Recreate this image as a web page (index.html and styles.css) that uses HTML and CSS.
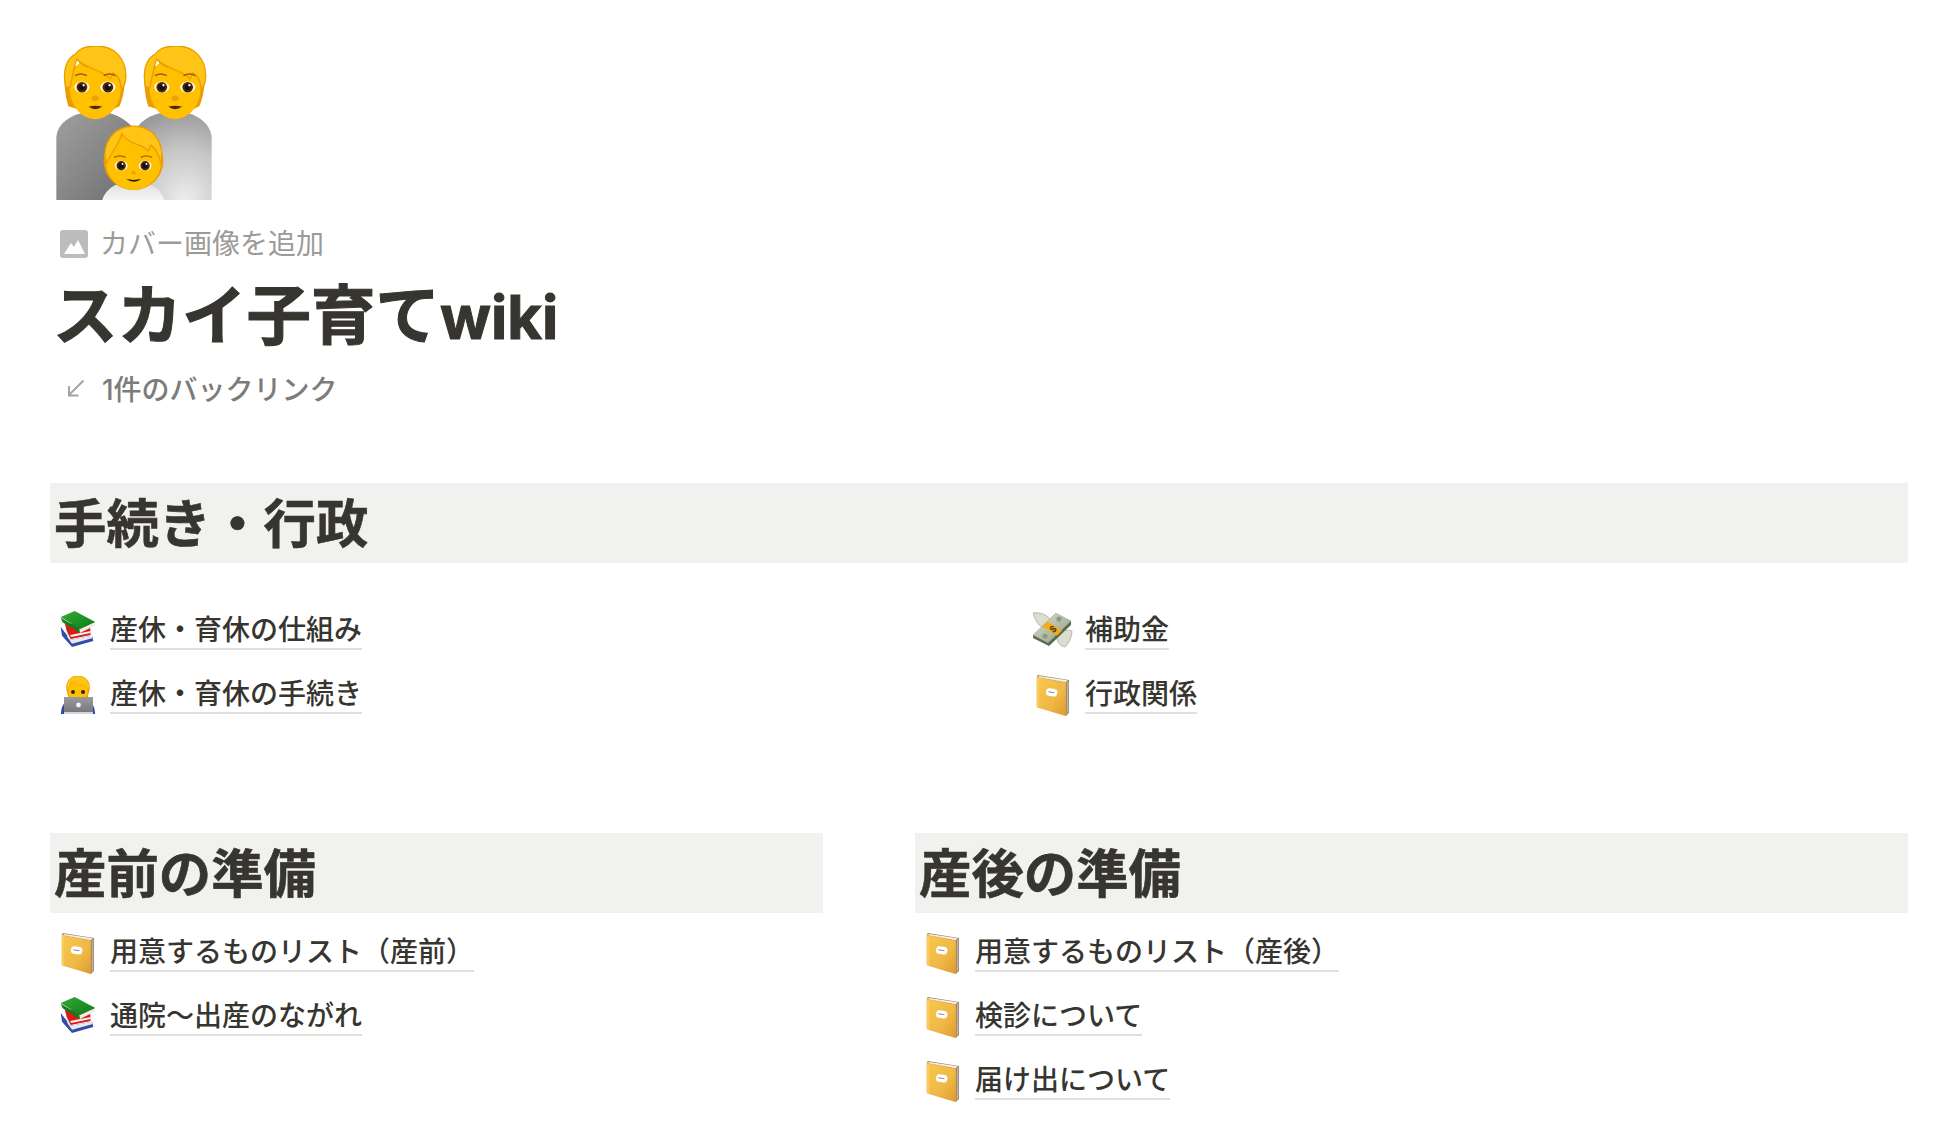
FILE: index.html
```html
<!DOCTYPE html>
<html lang="ja">
<head>
<meta charset="utf-8">
<title>スカイ子育てwiki</title>
<link rel="stylesheet" href="styles.css">
</head>
<body>
<svg class="defs" width="0" height="0" aria-hidden="true">
  <defs>
    <linearGradient id="bodyA" x1="0" y1="0" x2="1" y2="1"><stop offset="0" stop-color="#a0a0a0"/><stop offset=".55" stop-color="#858585"/><stop offset="1" stop-color="#6c6c6c"/></linearGradient>
    <radialGradient id="bodyB" cx=".65" cy="1" r="1"><stop offset="0" stop-color="#ededed"/><stop offset=".6" stop-color="#c4c4c4"/><stop offset="1" stop-color="#9a9a9a"/></radialGradient>
    <linearGradient id="bodyC" x1="0" y1="0" x2="0" y2="1"><stop offset="0" stop-color="#dcdcdc"/><stop offset="1" stop-color="#f6f6f6"/></linearGradient>
    <linearGradient id="cover" x1="0" y1="0" x2="1" y2="1"><stop offset="0" stop-color="#f8c850"/><stop offset=".6" stop-color="#f0b844"/><stop offset="1" stop-color="#dc9a30"/></linearGradient>
    <linearGradient id="green" x1="0" y1="0" x2="1" y2="1"><stop offset="0" stop-color="#35ab35"/><stop offset="1" stop-color="#0c7a18"/></linearGradient>
    <linearGradient id="note" x1="0" y1="0" x2="1" y2="1"><stop offset="0" stop-color="#dde2d2"/><stop offset="1" stop-color="#8f9a80"/></linearGradient>
    <linearGradient id="laptop" x1="0" y1="0" x2="0" y2="1"><stop offset="0" stop-color="#9a9a9e"/><stop offset="1" stop-color="#77777b"/></linearGradient>

    <symbol id="adult" viewBox="0 0 240 300" overflow="visible">
      <path d="M84 228C74 195 68 150 78 105L250 120C258 160 250 200 238 228L222 236L108 236Z" fill="#ec9c00"/>
      <ellipse cx="165" cy="172" rx="77" ry="95" fill="#ffc000"/>
      <path d="M76 170C66 120 78 84 108 70C116 55 140 47 170 47C225 47 258 88 257 138C257 155 252 168 244 178C242 150 232 135 218 128C216 136 214 140 210 146C190 118 132 116 110 86C100 108 98 140 88 172Z" fill="#ffc516" stroke="#ee9c00" stroke-width="4"/>
      <path d="M110 86C118 100 130 108 144 112" fill="none" stroke="#ee9c00" stroke-width="3"/>
      <path d="M104 136Q122 126 140 136M190 136Q208 126 226 136" fill="none" stroke="#9c5f0a" stroke-width="4.500"/>
      <ellipse cx="125" cy="171" rx="23" ry="17" fill="#fff5d8"/><ellipse cx="203" cy="171" rx="23" ry="17" fill="#fff5d8"/>
      <circle cx="125" cy="171" r="16" fill="#4d2606"/><circle cx="203" cy="171" r="16" fill="#4d2606"/>
      <circle cx="125" cy="171" r="9" fill="#111"/><circle cx="203" cy="171" r="9" fill="#111"/>
      <circle cx="130" cy="165" r="3.500" fill="#fff"/><circle cx="208" cy="165" r="3.500" fill="#fff"/>
      <ellipse cx="165" cy="204" rx="11" ry="8" fill="#f0a000"/>
      <path d="M145 230Q165 224 186 230Q165 244 145 230Z" fill="#4d2606"/>
    </symbol>

    <symbol id="ledger" viewBox="0 0 94 115">
      <path d="M4 0L92 14L92 106L84 114L82 24L2 6Z" fill="#9a8468"/>
      <path d="M8 3L88 15L82 21L4 7Z" fill="#f6f1e6"/>
      <path d="M86 19L90 17L90 104L86 108Z" fill="#b7b3ad"/>
      <path d="M2 6L83 21L84 115L2 90Z" fill="url(#cover)" stroke="#d08f22" stroke-width="1"/>
      <path d="M2 6L8 7L8 92L2 90Z" fill="#fbcd58"/>
      <rect x="27" y="38" width="32" height="21" rx="9" fill="#fff" transform="rotate(9 42 50)"/>
      <path d="M34 47L51 50" stroke="#8a8a8a" stroke-width="3"/>
    </symbol>

    <symbol id="books" viewBox="0 0 108 108">
      <path d="M2 48L6 74L36 108L100 90L96 74L32 86Z" fill="#2b50a8"/>
      <path d="M20 58L32 86L96 74L96 82L36 98L22 78Z" fill="#e9e9ef"/>
      <path d="M14 36L20 60L32 84L92 72L90 44Z" fill="#d81b16"/>
      <path d="M30 72L92 60L92 66L34 78Z" fill="#f4f0ea"/>
      <path d="M2 20L60 54L60 66L8 34Z" fill="#0f7f1d"/>
      <path d="M58 54L106 33L104 44L60 66Z" fill="#eeeee4"/>
      <path d="M2 18L44 0L106 33L60 54Z" fill="url(#green)"/>
    </symbol>
  </defs>
</svg>

<main class="page">
  <svg class="page-icon" viewBox="48 47 467 463" role="img" aria-label="家族">
    <path d="M48 510V325C48 275 105 243 165 243C215 243 255 262 285 300L285 510Z" fill="url(#bodyA)"/>
    <path d="M285 510V300C305 265 350 243 405 243C465 243 515 280 515 325V510Z" fill="url(#bodyB)"/>
    <use href="#adult" x="0" y="0" width="240" height="300"/>
    <use href="#adult" x="240" y="0" width="240" height="300"/>
    <path d="M186 510C196 475 235 452 280 452C325 452 362 475 372 510Z" fill="url(#bodyC)"/>
    <ellipse cx="280" cy="392" rx="90" ry="88" fill="#ee9c00"/>
    <ellipse cx="280" cy="395" rx="83" ry="84" fill="#ffc000"/>
    <path d="M198 400C182 340 220 288 280 288C340 288 376 340 362 400C358 375 345 355 332 345C330 352 328 358 325 362C305 340 265 345 245 310C238 340 215 365 198 400Z" fill="#ffc516" stroke="#ee9c00" stroke-width="4"/>
    <path d="M222 382Q240 373 256 382M302 382Q318 373 336 382" fill="none" stroke="#9c5f0a" stroke-width="4"/>
    <ellipse cx="243" cy="407" rx="19" ry="15" fill="#fff5d8"/><ellipse cx="315" cy="407" rx="19" ry="15" fill="#fff5d8"/>
    <circle cx="243" cy="407" r="14" fill="#4d2606"/><circle cx="315" cy="407" r="14" fill="#4d2606"/>
    <circle cx="243" cy="407" r="8" fill="#111"/><circle cx="315" cy="407" r="8" fill="#111"/>
    <circle cx="247" cy="402" r="3" fill="#fff"/><circle cx="319" cy="402" r="3" fill="#fff"/>
    <ellipse cx="280" cy="428" rx="7" ry="5" fill="#f0a000"/>
    <path d="M258 447Q280 452 303 447Q282 464 258 447Z" fill="#2d1a05"/>
  </svg>

  <div class="cover-add">
    <svg class="cover-icon" viewBox="0 0 28 28" aria-hidden="true">
      <rect width="28" height="28" rx="3" fill="#bcbcba"/>
      <path d="M4 24L11 13L14 17L18 10L25 24Z" fill="#fff"/>
    </svg>
    <span>カバー画像を追加</span>
  </div>

  <h1 class="title">スカイ子育て<span class="title-latin">wiki</span></h1>

  <div class="backlink">
    <svg class="backlink-icon" viewBox="0 0 18 18" aria-hidden="true">
      <path d="M16.500 1.500L2 16M2 7V16.500H11.500" fill="none" stroke="#a5a4a0" stroke-width="2"/>
    </svg>
    <span>1件のバックリンク</span>
  </div>

  <section class="section-wide">
    <h2 class="heading">手続き・行政</h2>
    <div class="admin-grid">
      <div class="col">
        <div class="row">
          <svg class="emoji emoji-books" aria-hidden="true"><use href="#books"/></svg>
          <a class="link">産休・育休の仕組み</a>
        </div>
        <div class="row">
          <svg class="emoji emoji-tech" viewBox="0 0 36 38" aria-hidden="true">
            <path d="M1 38C1 32 3 27 8 24H28C33 27 35 32 35 38Z" fill="#2f46a8"/>
            <path d="M7 16C5 6 10 0 18 0C26 0 31 6 29 16L27 24H9Z" fill="#ec9c00"/>
            <ellipse cx="18" cy="15" rx="10" ry="11" fill="#ffc000"/>
            <path d="M7 15C5 6 10 0 18 0C26 0 31 6 29 15C27 11 25 9 22 9C17 9 14 8 12 5C11 9 9 11 7 15Z" fill="#ffc516" stroke="#ee9c00" stroke-width=".6"/>
            <circle cx="13" cy="16" r="2" fill="#3a1f05"/><circle cx="23" cy="16" r="2" fill="#3a1f05"/>
            <path d="M4 21H33V37H4Z" fill="url(#laptop)"/>
            <path d="M4 36H33V38H4Z" fill="#d6d6d8"/>
            <circle cx="18.500" cy="29" r="2.400" fill="#f4f4f4"/>
          </svg>
          <a class="link">産休・育休の手続き</a>
        </div>
      </div>
      <div class="col">
        <div class="row">
          <svg class="emoji emoji-money" viewBox="0 0 40 36" aria-hidden="true">
            <path d="M0 1C6 0 13 2 17 7L9 15C5 13 2 8 0 1Z" fill="#dcdccf" stroke="#a4a696" stroke-width=".7"/>
            <path d="M39 19C39 25 35 33 32 35C27 34 24 30 24 26L31 18C33 18 36 18 39 19Z" fill="#dcdccf" stroke="#a4a696" stroke-width=".7"/>
            <path d="M0 23L23 1L38 9L38 13L16 34L0 26Z" fill="#5d6a52"/>
            <path d="M0 23L23 1L38 9L15 31Z" fill="url(#note)"/>
            <path d="M9 14.500L14 9.500L29 18.500L24 23.500Z" fill="#f0ad1e"/>
            <text class="dollar" x="19.500" y="20.500" transform="rotate(-42 19.500 16.500)">$</text>
            <circle cx="26" cy="7" r="2.600" fill="#8e9a80"/><circle cx="12" cy="24" r="2.600" fill="#8e9a80"/>
          </svg>
          <a class="link">補助金</a>
        </div>
        <div class="row">
          <svg class="emoji emoji-ledger" aria-hidden="true"><use href="#ledger"/></svg>
          <a class="link">行政関係</a>
        </div>
      </div>
    </div>
  </section>

  <div class="prep-grid">
    <section class="col">
      <h2 class="heading">産前の準備</h2>
      <div class="list">
        <div class="row">
          <svg class="emoji emoji-ledger" aria-hidden="true"><use href="#ledger"/></svg>
          <a class="link">用意するものリスト（産前）</a>
        </div>
        <div class="row">
          <svg class="emoji emoji-books" aria-hidden="true"><use href="#books"/></svg>
          <a class="link">通院〜出産のながれ</a>
        </div>
      </div>
    </section>
    <section class="col">
      <h2 class="heading">産後の準備</h2>
      <div class="list">
        <div class="row">
          <svg class="emoji emoji-ledger" aria-hidden="true"><use href="#ledger"/></svg>
          <a class="link">用意するものリスト（産後）</a>
        </div>
        <div class="row">
          <svg class="emoji emoji-ledger" aria-hidden="true"><use href="#ledger"/></svg>
          <a class="link">検診について</a>
        </div>
        <div class="row">
          <svg class="emoji emoji-ledger" aria-hidden="true"><use href="#ledger"/></svg>
          <a class="link">届け出について</a>
        </div>
      </div>
    </section>
  </div>
</main>
</body>
</html>
```

FILE: styles.css
```css
* { box-sizing: border-box; }
html, body { margin: 0; padding: 0; background: #fff; }
body {
  color: #37352f;
  font-family: Inter, "Noto Sans CJK JP", sans-serif;
  overflow: hidden;
}
.defs { display: block; height: 0; }
.page { padding: 46px 36px 0 50px; }
.page-icon { display: block; width: 156px; height: 154px; margin-left: 6px; }

.cover-add {
  display: flex;
  align-items: center;
  gap: 12px;
  height: 32px;
  margin-top: 28px;
  padding-left: 10px;
  font-size: 28px;
  line-height: 32px;
  color: #9b9a97;
}
.cover-icon { width: 28px; height: 28px; flex: none; }

.title {
  margin: 17px 0 0 3px;
  height: 78px;
  font-size: 64.5px;
  line-height: 78px;
  font-weight: 700;
  -webkit-text-stroke: 1px #37352f;
}
.title-latin { font-size: 60px; }

.backlink {
  display: flex;
  align-items: center;
  gap: 17px;
  height: 36px;
  margin-top: 15px;
  padding-left: 17px;
  font-size: 28px;
  font-weight: 500;
  color: #7d7c78;
}
.backlink-icon { width: 18px; height: 18px; flex: none; }

.section-wide { margin-top: 77px; }

.heading {
  margin: 0;
  height: 80px;
  padding-left: 4px;
  background: #f1f1ef;
  font-size: 52.4px;
  line-height: 83px;
  font-weight: 700;
  -webkit-text-stroke: .6px #37352f;
}

.admin-grid {
  display: grid;
  grid-template-columns: 975px 1fr;
  margin-top: 31px;
}

.row {
  display: flex;
  align-items: flex-end;
  height: 64px;
  padding: 0 0 8px 8px;
  position: relative;
}
.link {
  margin-left: 52px;
  font-size: 28px;
  line-height: 36px;
  font-weight: 500;
  border-bottom: 2px solid rgba(55, 53, 47, .16);
}

.emoji { position: absolute; display: block; }
.emoji-books { left: 10px; top: 17px; width: 36px; height: 36px; }
.emoji-tech { left: 10px; top: 18px; width: 36px; height: 38px; }
.emoji-money { left: 8px; top: 18px; width: 40px; height: 36px; }
.emoji-ledger { left: 11px; top: 17px; width: 34px; height: 41px; }
.dollar { font-size: 9px; font-weight: 700; fill: #5a4410; text-anchor: middle; }

.prep-grid {
  display: grid;
  grid-template-columns: 773px 1fr;
  column-gap: 92px;
  margin-top: 111px;
}
.list { margin-top: 3px; }
```
